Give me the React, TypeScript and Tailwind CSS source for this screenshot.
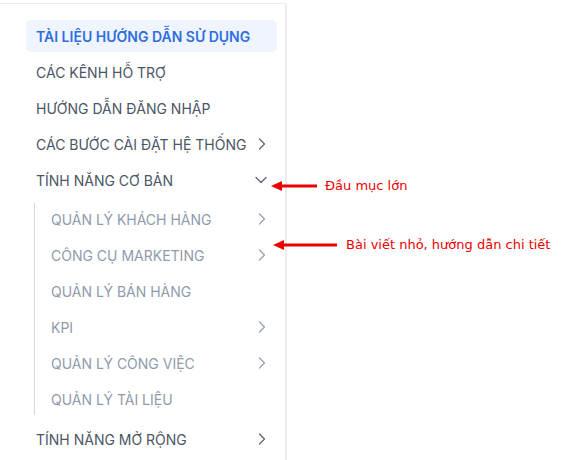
import { ChevronDown, ChevronRight } from 'lucide-react';

type Item = { label: string; more?: boolean };

const topItems: Item[] = [
  { label: 'CÁC KÊNH HỖ TRỢ' },
  { label: 'HƯỚNG DẪN ĐĂNG NHẬP' },
  { label: 'CÁC BƯỚC CÀI ĐẶT HỆ THỐNG', more: true },
];

const subItems: Item[] = [
  { label: 'QUẢN LÝ KHÁCH HÀNG', more: true },
  { label: 'CÔNG CỤ MARKETING', more: true },
  { label: 'QUẢN LÝ BÁN HÀNG' },
  { label: 'KPI', more: true },
  { label: 'QUẢN LÝ CÔNG VIỆC', more: true },
  { label: 'QUẢN LÝ TÀI LIỆU' },
];

function Arrow({ width }: { width: number }) {
  return (
    <svg width={width} height="10" viewBox={`0 0 ${width} 10`}>
      <line x1="8" y1="5" x2={width} y2="5" stroke="#ee0000" strokeWidth="3" />
      <polygon points="0,5 11,0 11,10" fill="#ee0000" />
    </svg>
  );
}

export default function App() {
  return (
    <div className="relative w-[579px] h-[460px] bg-white overflow-hidden font-['Inter',sans-serif]">
      <div className="mt-[3px] w-[287px] h-[457px] border-t border-r-2 border-[#ececec] pl-[26px] pr-[8px] pt-[16px]">
        <div className="h-8 mb-1 flex items-center px-[10px] rounded-[5px] bg-[#eff4fe] text-[14px] font-semibold text-[#2f6fdc]">
          TÀI LIỆU HƯỚNG DẪN SỬ DỤNG
        </div>

        {topItems.map((it) => (
          <div key={it.label} className="h-8 mb-1 flex items-center justify-between pl-[10px] pr-[5px] text-[14px] text-[#4b5565]">
            <span>{it.label}</span>
            {it.more && <ChevronRight size={20} strokeWidth={1.5} className="text-[#5b6576]" />}
          </div>
        ))}

        <div className="h-8 flex items-center justify-between pl-[10px] pr-[6px] text-[14px] text-[#4b5565]">
          <span>TÍNH NĂNG CƠ BẢN</span>
          <ChevronDown size={20} strokeWidth={1.5} className="text-[#5b6576]" />
        </div>

        <div className="mt-[7px] mb-2 ml-[8px] border-l border-[#d3dae3] flex flex-col gap-1">
          {subItems.map((it) => (
            <div key={it.label} className="h-8 flex items-center justify-between pl-[16px] pr-[5px] text-[14px] text-[#8f9bac]">
              <span>{it.label}</span>
              {it.more && <ChevronRight size={20} strokeWidth={1.5} className="text-[#97a3b3]" />}
            </div>
          ))}
        </div>

        <div className="h-8 flex items-center justify-between pl-[10px] pr-[5px] text-[14px] text-[#4b5565]">
          <span>TÍNH NĂNG MỞ RỘNG</span>
          <ChevronRight size={20} strokeWidth={1.5} className="text-[#5b6576]" />
        </div>
      </div>

      <div className="absolute left-[271px] top-[176px] flex items-center gap-[8px] font-['DejaVu_Sans',sans-serif] text-[13px] text-[#ee0000]">
        <Arrow width={46} />
        <span>Đầu mục lớn</span>
      </div>

      <div className="absolute left-[273px] top-[235px] flex items-center gap-[9px] font-['DejaVu_Sans',sans-serif] text-[13px] text-[#ee0000]">
        <Arrow width={64} />
        <span>Bài viết nhỏ, hướng dẫn chi tiết</span>
      </div>
    </div>
  );
}
